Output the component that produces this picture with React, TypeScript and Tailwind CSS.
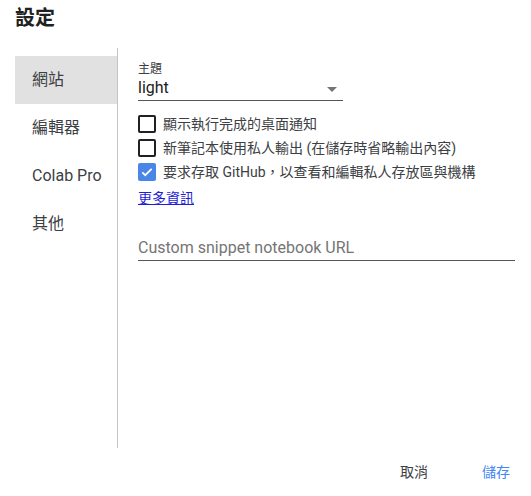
import React, { useState } from "react";

const font = { fontFamily: "Roboto, 'Noto Sans CJK TC', sans-serif" };

const tabs = ["網站", "編輯器", "Colab Pro", "其他"];

function Checkbox({ checked, label, onToggle }: { checked: boolean; label: string; onToggle: () => void }) {
    return (
        <div className="flex items-center h-[24px] cursor-pointer" onClick={onToggle}>
            {checked ? (
                <span className="w-[18px] h-[18px] rounded-[2px] bg-[#4a86e8] flex items-center justify-center">
                    <svg width="14" height="14" viewBox="0 0 24 24" fill="none">
                        <path d="M4 12.5l5 5L20 6.5" stroke="white" strokeWidth="3" />
                    </svg>
                </span>
            ) : (
                <span className="w-[18px] h-[18px] rounded-[2px] border-2 border-[#202124]" />
            )}
            <span className="ml-[7px] text-[14px] leading-[20px] text-[#3c4043]">{label}</span>
        </div>
    );
}

export default function App() {
    const [tab, setTab] = useState(0);
    const [opts, setOpts] = useState([false, false, true]);

    const toggle = (i: number) => setOpts(prev => prev.map((v, j) => (j === i ? !v : v)));

    return (
        <div className="w-[531px] h-[496px] bg-white flex flex-col text-[#212121]" style={font}>
            <div className="h-[48px] px-[15px] pt-[4px] text-[20px] leading-[28px] font-bold">設定</div>

            <div className="flex h-[400px]">
                {/* sidebar */}
                <div className="w-[118px] pl-[15px] pt-[8px] border-r border-[#c4c4c4]">
                    {tabs.map((t, i) => (
                        <div key={t} onClick={() => setTab(i)}
                            className={"h-[48px] w-[102px] pl-[17px] flex items-center text-[16px] text-[#3c4043] cursor-pointer " + (tab === i ? "bg-[#e1e1e1]" : "")}>
                            {t}
                        </div>
                    ))}
                </div>

                {/* content */}
                <div className="flex-1 pl-[20px] pr-[16px] pt-[13px]">
                    <div className="w-[205px]">
                        <div className="text-[12px] leading-[16px] text-[#3c4043]">主題</div>
                        <div className="relative pt-[1px] pb-[2px] border-b border-[#555]">
                            <div className="text-[16px] leading-[20px] text-[#212121]">light</div>
                            <span className="absolute right-[6px] top-[10px] w-0 h-0 border-l-[5px] border-r-[5px] border-t-[5px] border-l-transparent border-r-transparent border-t-[#757575]" />
                        </div>
                    </div>

                    <div className="mt-[11px]">
                        <Checkbox checked={opts[0]} label="顯示執行完成的桌面通知" onToggle={() => toggle(0)} />
                        <Checkbox checked={opts[1]} label="新筆記本使用私人輸出 (在儲存時省略輸出內容)" onToggle={() => toggle(1)} />
                        <Checkbox checked={opts[2]} label="要求存取 GitHub，以查看和編輯私人存放區與機構" onToggle={() => toggle(2)} />
                    </div>

                    <a href="#" className="block mt-[4px] text-[14px] leading-[20px] text-[#1f1fd6] underline w-fit">更多資訊</a>

                    <div className="mt-[30px] pb-[2px] border-b border-[#555]">
                        <div className="text-[16px] leading-[20px] text-[#757575]">Custom snippet notebook URL</div>
                    </div>
                </div>
            </div>

            <div className="h-[48px] flex items-center justify-end pr-[9px] gap-[30px] text-[14px]">
                <button className="px-[12px] h-[36px] text-[#3c4043]">取消</button>
                <button className="px-[12px] h-[36px] text-[#4285f4]">儲存</button>
            </div>
        </div>
    );
}
